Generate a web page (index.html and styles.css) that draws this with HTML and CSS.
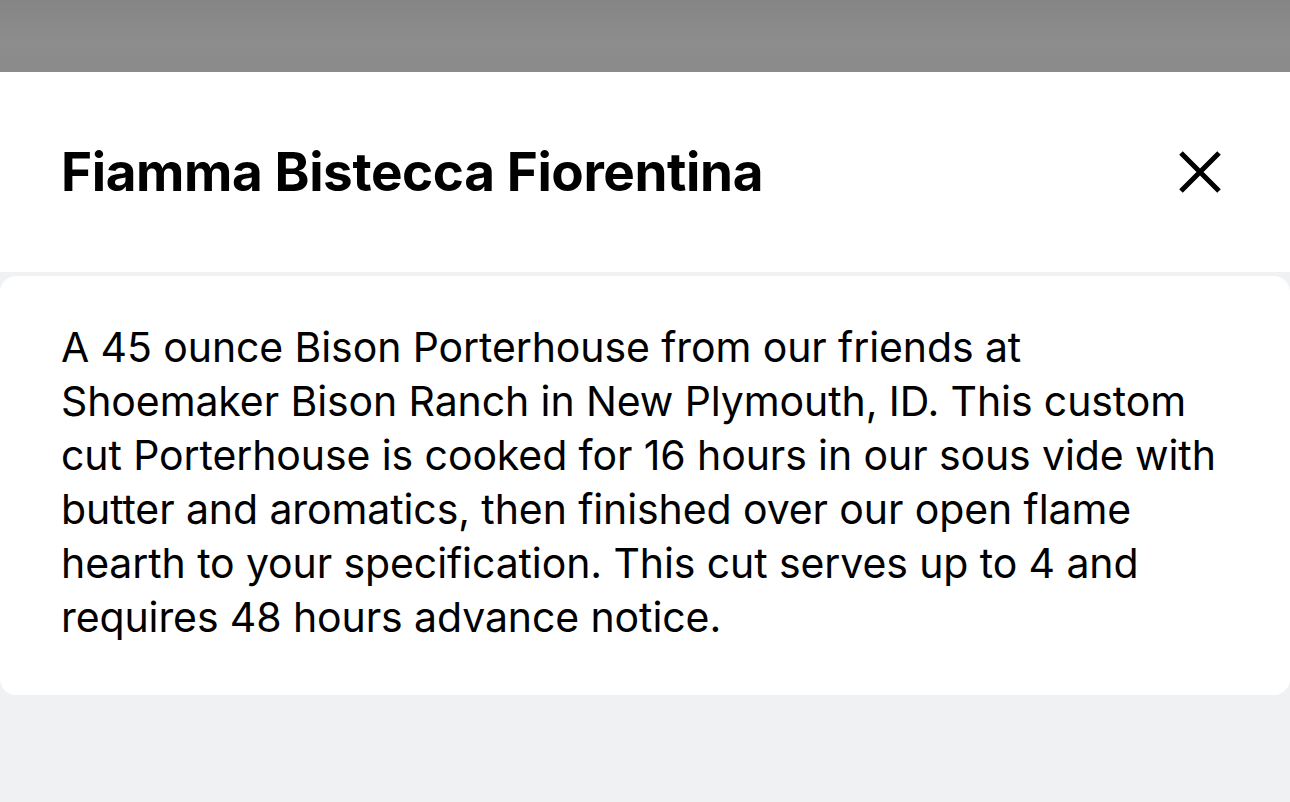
FILE: index.html
```html
<!DOCTYPE html>
<html>
<head>
<meta charset="utf-8">
<link rel="stylesheet" href="styles.css">
</head>
<body>
<div class="backdrop"></div>
<div class="sheet">
  <header class="sheet-header">
    <h1 class="title">Fiamma Bistecca Fiorentina</h1>
    <button class="close" aria-label="Close">
      <svg width="44" height="44" viewBox="0 0 44 44"><path d="M3 3 L41 41 M41 3 L3 41" stroke="#000" stroke-width="5" fill="none"/></svg>
    </button>
  </header>
  <section class="card">
    <p class="desc">A 45 ounce Bison Porterhouse from our friends at Shoemaker Bison Ranch in New Plymouth, ID. This custom cut Porterhouse is cooked for 16 hours in our sous vide with butter and aromatics, then finished over our open flame hearth to your specification. This cut serves up to 4 and requires 48 hours advance notice.</p>
  </section>
</div>
</body>
</html>
```

FILE: styles.css
```css
* { box-sizing: border-box; }
html, body { margin: 0; padding: 0; }
body {
  width: 1290px;
  height: 802px;
  overflow: hidden;
  background: #f0f1f3;
  font-family: Inter, "Liberation Sans", sans-serif;
  color: #000;
}
.backdrop {
  height: 72px;
  background: linear-gradient(180deg, #858585 0%, #8d8d8d 60%, #8a8a8a 100%);
}
.sheet {
  display: flex;
  flex-direction: column;
  gap: 4px;
}
.sheet-header {
  height: 200px;
  background: #fff;
  display: flex;
  align-items: center;
  justify-content: space-between;
  padding: 0 68px 0 61px;
}
.title {
  margin: 0;
  font-size: 53px;
  font-weight: 700;
  letter-spacing: -0.4px;
  line-height: 1;
}
.close {
  border: 0;
  background: none;
  padding: 0;
  width: 44px;
  height: 44px;
  display: flex;
  cursor: pointer;
}
.card {
  background: #fff;
  border-radius: 16px;
  padding: 44px 61px 51px 61px;
}
.desc {
  margin: 0;
  font-size: 41px;
  line-height: 54px;
  letter-spacing: -0.1px;
  max-width: 1170px;
}
```
